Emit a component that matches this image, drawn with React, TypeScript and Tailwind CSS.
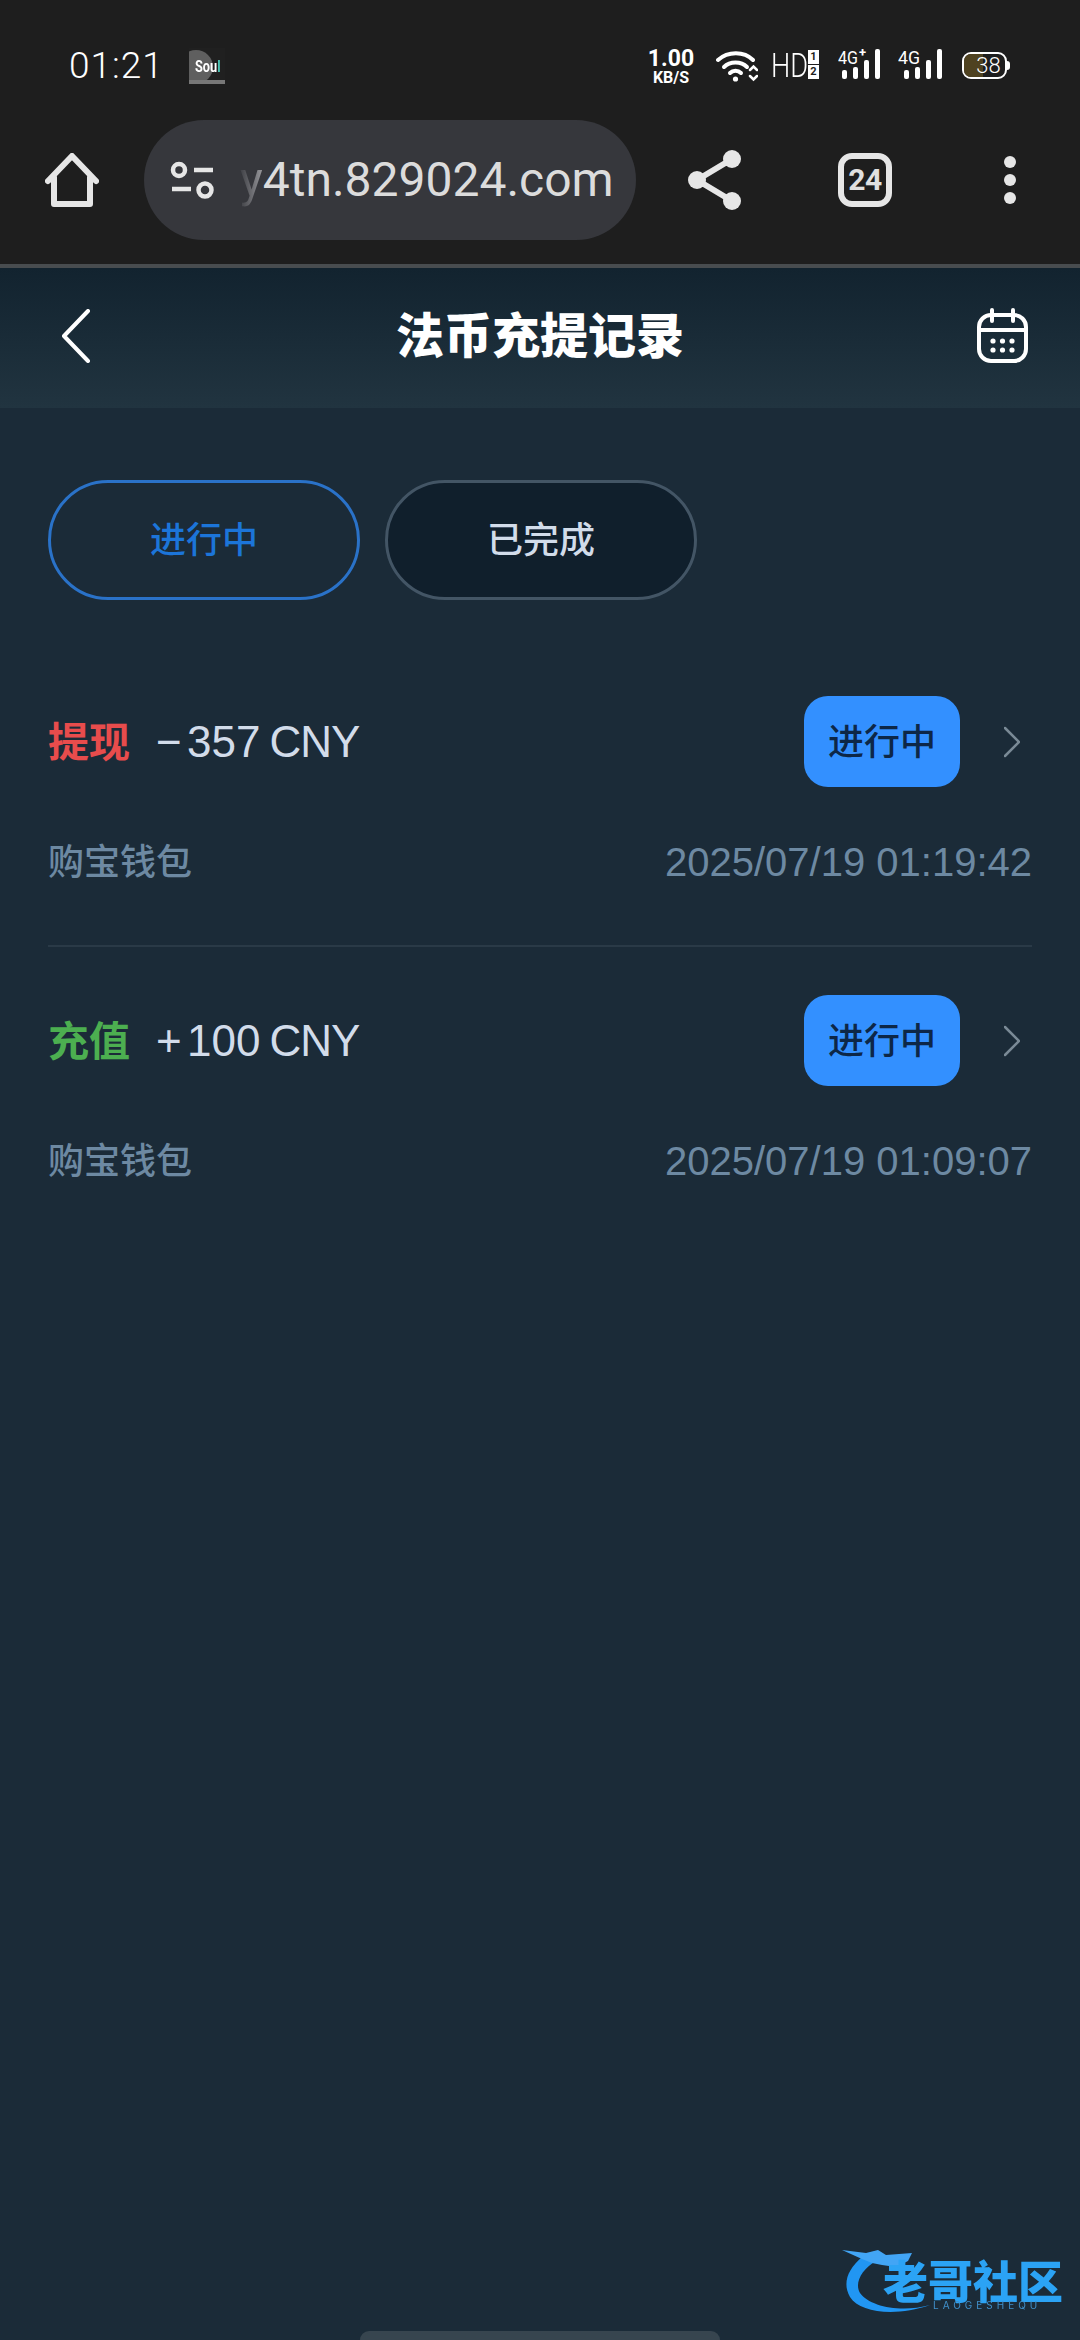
import React from "react";

const records = [
  { type: "提现", sign: "−", amount: "357", color: "text-[#e84c4c]", time: "2025/07/19 01:19:42" },
  { type: "充值", sign: "+", amount: "100", color: "text-[#4caf50]", time: "2025/07/19 01:09:07" },
];

const Signal = ({ plus }: { plus?: boolean }) => {
  const off = plus ? 4 : 6;
  return (
    <svg className="mt-[-4px]" width="46" height="36" viewBox="0 0 46 36" fill="#fff">
      <text x="0" y="20" fontSize="18" fontFamily="Roboto, sans-serif" fill="#fff" textLength={plus ? 20 : 22} lengthAdjust="spacingAndGlyphs">
        4G
      </text>
      {plus && <text x="21" y="13" fontSize="13" fontWeight="700" fontFamily="Roboto, sans-serif" fill="#fff">+</text>}
      <rect x={off} y="26" width="5" height="9" rx="2" />
      <rect x={off + 11} y="23" width="5" height="12" rx="2" />
      <rect x={off + 22} y="16" width="5" height="19" rx="2" />
      <rect x={off + 33} y="5" width="5" height="30" rx="2" />
    </svg>
  );
};

const StatusBar = () => (
  <div className="flex h-[120px] items-start justify-between pt-[48px] pl-[69px] pr-[70px] text-white font-['Roboto',sans-serif]">
    <div className="flex items-center">
      <span className="w-[89px] text-[37px] leading-[36px] font-light tracking-[1px] whitespace-nowrap">01:21</span>
      <div className="relative ml-[31px] h-[36px] w-[36px] overflow-hidden bg-[#202020]">
        <div className="absolute left-[-10px] top-[2px] h-[34px] w-[34px] rounded-full bg-[#5f5f5f]"></div>
        <div className="absolute bottom-0 left-0 h-[4px] w-full bg-[#777]"></div>
        <span className="absolute left-[6px] top-[10px] origin-left scale-x-75 text-[17px] leading-[16px] font-bold">
          Sou<span className="text-[#4cc9b8]">l</span>
        </span>
      </div>
    </div>
    <div className="flex items-start">
      <div className="flex w-[50px] flex-col items-center pt-[1px] font-bold">
        <span className="text-[23px] leading-[20px]">1.00</span>
        <span className="text-[16px] leading-[17px]">KB/S</span>
      </div>
      <svg className="ml-[20px] mt-[2px]" width="42" height="32" viewBox="0 0 42 32" fill="none" stroke="#fff" strokeLinecap="round">
        <path d="M2 10 C12 1 28 1 37 10" strokeWidth="4" />
        <path d="M8 17 C14 11 25 11 31 17" strokeWidth="4" />
        <path d="M14 23 C17 20 22 20 25 23" strokeWidth="4" />
        <circle cx="19.5" cy="29" r="2.6" fill="#fff" stroke="none" />
        <path d="M34 20 l3.5 -3.5 l3.5 3.5 M34 26 l3.5 3.5 l3.5 -3.5" strokeWidth="2.5" />
      </svg>
      <div className="ml-[13px] mt-[1px] w-[36px]">
        <span className="block origin-left scale-x-[0.8] text-[34px] leading-[32px] font-light whitespace-nowrap">HD</span>
      </div>
      <div className="ml-[1px] mt-[2px] flex flex-col gap-[1px] text-[11px] leading-[14px] font-bold text-[#1e1e1e]">
        <span className="h-[14px] w-[11px] bg-white text-center">1</span>
        <span className="h-[14px] w-[11px] bg-white text-center">2</span>
      </div>
      <div className="ml-[19px]"><Signal plus /></div>
      <div className="ml-[14px]"><Signal /></div>
      <div className="relative ml-[18px] mt-[4px] flex h-[27px] w-[45px] items-center justify-center overflow-hidden rounded-[9px] border-[2.5px] border-white">
        <div className="absolute inset-y-0 left-0 w-[19px] bg-[#4f4220]"></div>
        <span className="relative pl-[8px] text-[22px] leading-[22px] font-light">38</span>
      </div>
      <div className="mt-[13px] h-[9px] w-[3px] rounded-r-full bg-white"></div>
    </div>
  </div>
);

const Toolbar = () => (
  <div className="flex h-[148px] items-start border-b-[4px] border-[#484c4f] font-['Roboto',sans-serif]">
    <svg className="ml-[45px] mt-[33px]" width="54" height="54" viewBox="0 0 54 54" fill="none" stroke="#e6e6e6" strokeWidth="6" strokeLinejoin="round" strokeLinecap="round">
      <path d="M3 28 L27 3 L51 28 M9 24 V51 H45 V24" />
    </svg>
    <div className="ml-[45px] flex h-[120px] w-[492px] items-center overflow-hidden rounded-full bg-[#36373c] pl-[26px]">
      <svg width="44" height="38" viewBox="0 0 44 38" fill="none" stroke="#e6e6e6" strokeWidth="4.5">
        <circle cx="9" cy="9" r="6" />
        <circle cx="35" cy="29" r="6.5" />
        <path d="M24 9 H43 M2 28 H21" />
      </svg>
      <span className="ml-[26px] whitespace-nowrap text-[48px] leading-[60px] text-[#dcdcdc]">
        <span className="bg-gradient-to-r from-[#3f4045] to-[#9a9a9e] bg-clip-text text-transparent">y</span>4tn.829024.com
      </span>
    </div>
    <svg className="ml-[51px] mt-[29px]" width="56" height="62" viewBox="0 0 56 62" fill="#e6e6e6" stroke="#e6e6e6">
      <path d="M10 31 L45 10 M10 31 L45 52" strokeWidth="6" fill="none" />
      <circle cx="10" cy="31" r="9" stroke="none" />
      <circle cx="45" cy="10" r="9" stroke="none" />
      <circle cx="45" cy="52" r="9" stroke="none" />
    </svg>
    <div className="ml-[95px] mt-[33px] flex h-[54px] w-[54px] items-center justify-center rounded-[14px] border-[6px] border-[#e6e6e6] text-[30px] leading-[30px] font-bold tracking-[-0.5px] text-[#e0e0e0]">
      24
    </div>
    <div className="ml-[112px] mt-[36px] flex flex-col gap-[6px]">
      <div className="h-[12px] w-[12px] rounded-full bg-[#e6e6e6]"></div>
      <div className="h-[12px] w-[12px] rounded-full bg-[#e6e6e6]"></div>
      <div className="h-[12px] w-[12px] rounded-full bg-[#e6e6e6]"></div>
    </div>
  </div>
);

const Header = () => (
  <div className="flex h-[140px] items-center bg-gradient-to-b from-[#12232f] to-[#213440] px-[51px] pb-[4px]">
    <div className="flex-1">
      <svg className="ml-[10px]" width="30" height="54" viewBox="0 0 30 54" fill="none" stroke="#fff" strokeWidth="4" strokeLinecap="round" strokeLinejoin="round">
        <path d="M27 2 L3 27 L27 52" />
      </svg>
    </div>
    <span className="text-[48px] leading-[60px] font-black text-white">法币充提记录</span>
    <div className="flex flex-1 justify-end">
      <svg width="52" height="56" viewBox="0 0 52 56" fill="none" stroke="#fff" strokeWidth="4">
        <rect x="2" y="7" width="47" height="46" rx="12" />
        <path d="M2 22 H49" />
        <path d="M15 2 V13 M36 2 V13" strokeLinecap="round" />
        <g fill="#fff" stroke="none">
          <circle cx="16" cy="33" r="2.6" />
          <circle cx="25.5" cy="33" r="2.6" />
          <circle cx="35" cy="33" r="2.6" />
          <circle cx="16" cy="42" r="2.6" />
          <circle cx="25.5" cy="42" r="2.6" />
          <circle cx="35" cy="42" r="2.6" />
        </g>
      </svg>
    </div>
  </div>
);

const Logo = () => (
  <div className="absolute left-[842px] top-[2247px] h-[68px] w-[224px] blur-[0.6px]">
    <svg className="absolute left-0 top-0" width="110" height="68" viewBox="0 0 110 68" fill="#2196f3">
      <path d="M20 10 C6 22 0 36 8 50 C18 66 54 70 88 58 C60 66 28 60 18 46 C12 36 20 22 34 14 Z" />
      <path d="M0 3 L24 6 L36 3 L44 8 L70 6 L66 14 L54 20 L40 18 L30 16 L20 12 Z" fill="#42a5f5" />
    </svg>
    <span className="absolute left-[41px] top-[20px] whitespace-nowrap text-[45px] leading-[32px] font-black text-[#2ba3f5]">老哥社区</span>
    <span className="absolute left-[91px] top-[53px] whitespace-nowrap text-[10px] leading-[10px] tracking-[4px] text-[#3f8fc9]">LAOGESHEQU</span>
  </div>
);

export default function App() {
  return (
    <div className="relative flex h-[2340px] w-[1080px] flex-col overflow-hidden bg-[#1b2b38] font-['Inter','Noto_Sans_CJK_SC',sans-serif]">
      <div className="bg-[#1e1e1e]">
        <StatusBar />
        <Toolbar />
      </div>
      <Header />

      <div className="mt-[72px] flex gap-[25px] px-[48px]">
        <div className="flex h-[120px] w-[312px] items-center justify-center rounded-full border-[3px] border-[#2a72c8] text-[36px] font-medium text-[#1c75d9]">进行中</div>
        <div className="flex h-[120px] w-[312px] items-center justify-center rounded-full border-[3px] border-[#435565] bg-[#101f2c] text-[36px] font-medium text-[#d2dcea]">已完成</div>
      </div>

      <div className="mt-[96px] px-[48px]">
        {records.map((r, i) => (
          <div key={r.time} className={i > 0 ? "mt-[48px]" : ""}>
            <div className="flex h-[91px] items-center">
              <span className={`text-[41px] leading-[50px] font-bold ${r.color}`}>{r.type}</span>
              <div className="flex items-center font-['Liberation_Sans',sans-serif] text-[44px] leading-[50px] text-[#d2dcea]">
                <span className="ml-[26px] w-[31px]">{r.sign}</span>
                <span>{r.amount}</span>
                <span className="ml-[9px] tracking-[-1px]">CNY</span>
              </div>
              <div className="ml-auto flex h-[91px] w-[156px] items-center justify-center rounded-[24px] bg-[#3390ff] text-[36px] font-medium text-[#0d2747]">进行中</div>
              <svg className="ml-[44px] mr-[12px]" width="16" height="32" viewBox="0 0 16 32" fill="none" stroke="#7a8a96" strokeWidth="2.5" strokeLinecap="round">
                <path d="M1 2 L15 16 L1 30" />
              </svg>
            </div>
            <div className="mt-[50px] flex items-center justify-between leading-[50px] text-[#6d89a2]">
              <span className="text-[36px] font-medium">购宝钱包</span>
              <span className="font-['Liberation_Sans',sans-serif] text-[40px]">{r.time}</span>
            </div>
            {i === 0 && <div className="mt-[58px] h-[2px] bg-[#2a3a47]"></div>}
          </div>
        ))}
      </div>

      <Logo />
      <div className="absolute bottom-0 left-[360px] h-[9px] w-[360px] rounded-t-full bg-[#37454f]"></div>
    </div>
  );
}
